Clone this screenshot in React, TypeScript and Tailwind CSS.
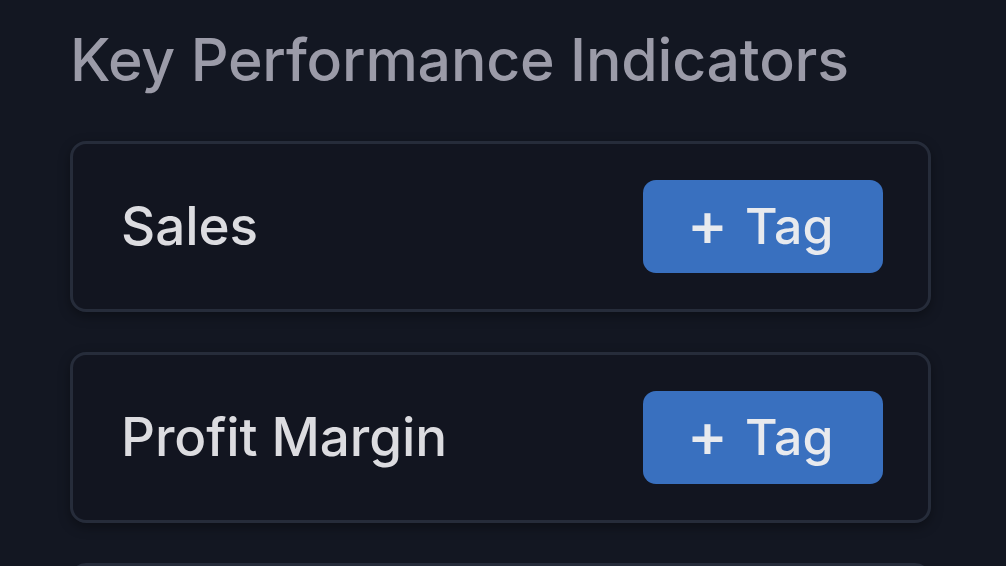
const kpis = ['Sales', 'Profit Margin'];

export default function App() {
  return (
    <div
      className="h-[566px] w-full bg-[#131722] overflow-hidden"
      style={{ fontFamily: 'Inter, "Noto Sans", sans-serif' }}
    >
      <div className="px-[70px] pt-[24px]">
        <h1 className="text-[59px] leading-[72px] font-medium text-[#9b9ba8] tracking-[-0.2px]">
          Key Performance Indicators
        </h1>
        <div className="mt-[45px] flex flex-col gap-[40px] w-[861px]">
          {kpis.map((k) => (
            <div
              key={k}
              className="h-[171px] rounded-[16px] border-[3px] border-[#262c3a] bg-[#121520] shadow-[0_4px_12px_rgba(0,0,0,0.35)] flex items-center justify-between pl-[48px] pr-[45px]"
            >
              <span className="text-[53px] font-medium text-[#dcdce0] tracking-[-0.1px]">{k}</span>
              <button className="w-[240px] h-[93px] rounded-[13px] bg-[#3970bf] text-[#e8eaee] text-[50px] font-medium flex items-center justify-center gap-[17px] pr-[6px]">
                <span className="text-[62px] leading-none -mt-[5px]">+</span>
                <span>Tag</span>
              </button>
            </div>
          ))}
          {/* next card, only its top edge is in view */}
          <div className="h-[171px] rounded-[16px] border-[3px] border-[#262c3a] bg-[#121520]" />
        </div>
      </div>
    </div>
  );
}
